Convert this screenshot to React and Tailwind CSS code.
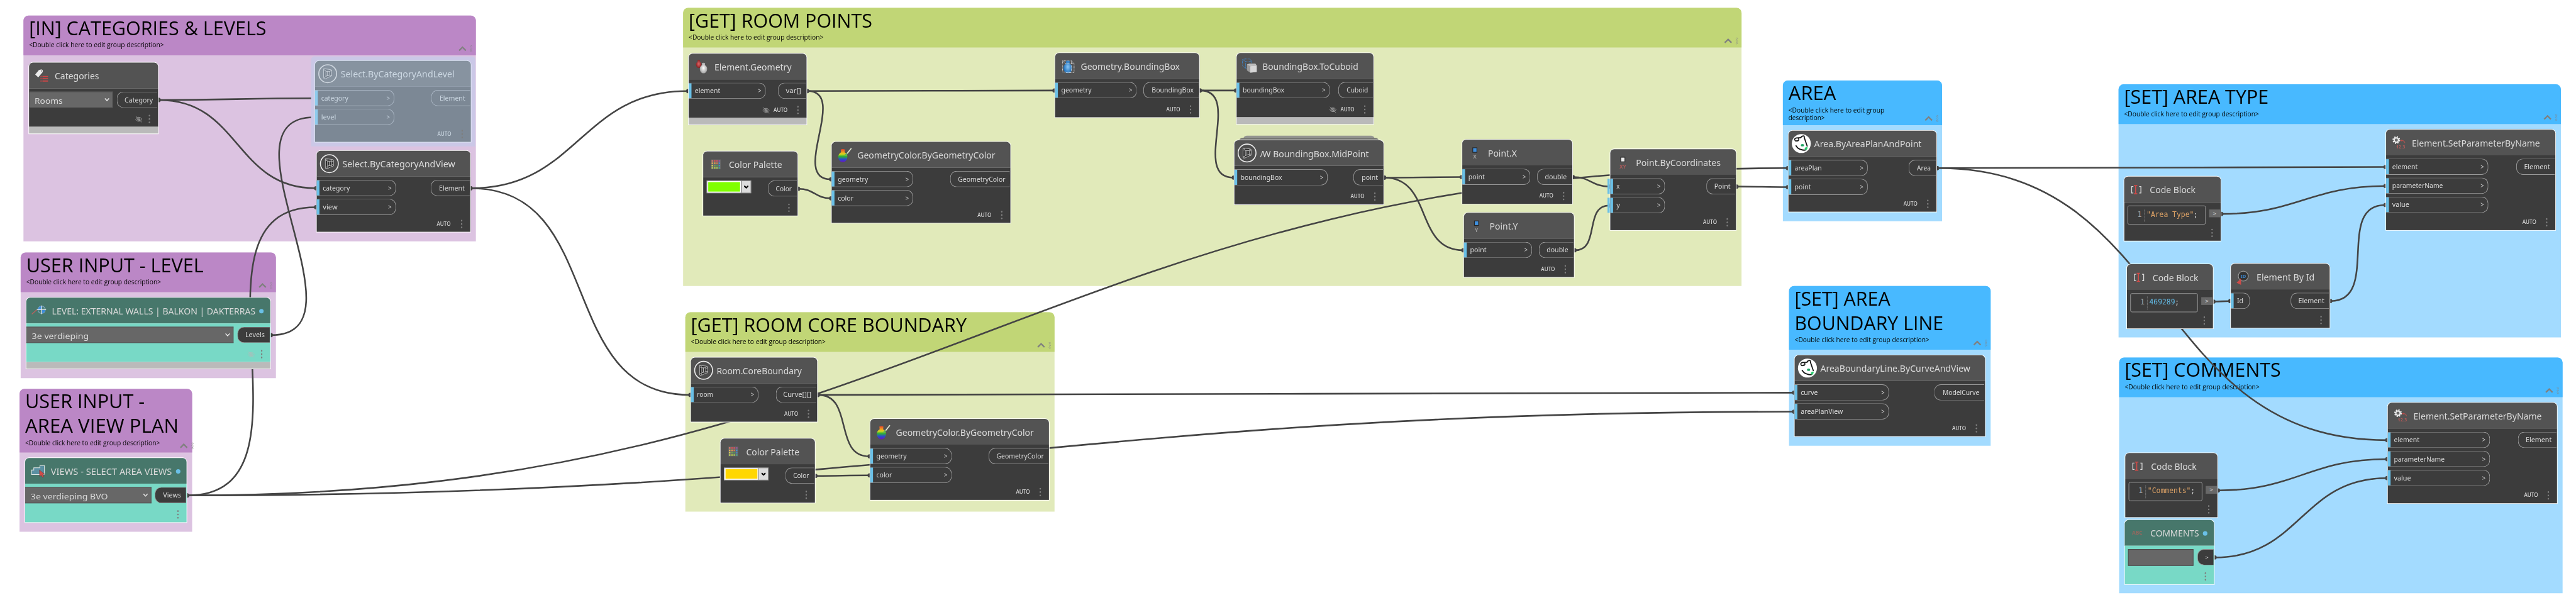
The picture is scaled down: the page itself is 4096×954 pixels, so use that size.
import { useLayoutEffect, useRef } from 'react';

const DESC = '<Double click here to edit group description>';

/* Text squeezed or stretched horizontally to a known width. */
function Fit({ w, className = '', children }) {
  const ref = useRef(null);
  useLayoutEffect(() => {
    const el = ref.current;
    if (el && w && el.offsetWidth) el.style.transform = `scaleX(${w / el.offsetWidth})`;
  }, [w]);
  return (
    <span className={`block shrink-0 whitespace-pre ${className}`} style={{ width: w }}>
      <span ref={ref} className="inline-block origin-left">{children}</span>
    </span>
  );
}

const GROUP = {
  purple: { head: 'bg-[#bb87c6]', body: 'bg-[#dcc3e1]' },
  green: { head: 'bg-[#c1d676]', body: 'bg-[#e1eaba]' },
  blue: { head: 'bg-[#48b9ff]', body: 'bg-[#a3dbff]' },
};

const groups = [
  { c: 'purple', x: 42, y: 28, r: 852, h: 71, b: 432, t: [['[IN] CATEGORIES & LEVELS', 425]] },
  { c: 'purple', x: 37, y: 452, r: 494, h: 71, b: 676.5, t: [['USER INPUT - LEVEL', 318]] },
  { c: 'purple', x: 35, y: 696, r: 344, h: 114, b: 952, t: [['USER INPUT -', 214], ['AREA VIEW PLAN', 275]] },
  { c: 'green', x: 1223, y: 14, r: 3118, h: 71, b: 512, t: [['[GET] ROOM POINTS', 329]] },
  { c: 'green', x: 1227, y: 559, r: 1888, h: 71, b: 916, t: [['[GET] ROOM CORE BOUNDARY', 494]] },
  { c: 'blue', x: 3192, y: 144, r: 3477, h: 80, b: 396, t: [['AREA', 85]], d: [['<Double click here to edit group', 172], ['description>', 65.5]] },
  { c: 'blue', x: 3203, y: 512, r: 3564, h: 114, b: 798, t: [['[SET] AREA', 171], ['BOUNDARY LINE', 266]] },
  { c: 'blue', x: 3793, y: 151, r: 4585, h: 71, b: 604, t: [['[SET] AREA TYPE', 259]] },
  { c: 'blue', x: 3794, y: 640, r: 4588, h: 71, b: 1062, t: [['[SET] COMMENTS', 279]] },
];

function Group({ g }) {
  const c = GROUP[g.c];
  return (
    <section
      className={`absolute flex flex-col rounded-t-[9px] ${c.body}`}
      style={{ left: g.x, top: g.y, width: g.r - g.x, height: g.b - g.y }}
    >
      <header className={`flex shrink-0 justify-between rounded-t-[9px] ${c.head}`} style={{ height: g.h }}>
        <div className="pl-[10px] font-['Open_Sans',sans-serif] text-black">
          <h2 className="text-[35px] leading-[44px]">
            {g.t.map(([s, w]) => <Fit key={s} w={w}>{s}</Fit>)}
          </h2>
          <div className="pt-[1.5px] text-[12px] leading-[14px]">
            {(g.d || [[DESC, 241]]).map(([s, w]) => <Fit key={s} w={w}>{s}</Fit>)}
          </div>
        </div>
        <svg className="mr-[5px] mb-[4px] shrink-0 self-end" width="28" height="16" viewBox="0 0 28 16">
          <path d="M3 11.5 L9 5.5 L15 11.5" fill="none" stroke="#808080" strokeWidth="2.6" />
          <g fill="none" stroke="#858585" strokeWidth="1" strokeDasharray="1.2 .8">
            <circle cx="24.5" cy="4" r="1.4" />
            <circle cx="24.5" cy="8.2" r="1.4" />
            <circle cx="24.5" cy="12.4" r="1.4" />
          </g>
        </svg>
      </header>
    </section>
  );
}

/* ---------- node icons, drawn on the 46x46 left part of a node header ---------- */

function Vase({ x, y, fill, s = 1 }) {
  return (
    <g transform={`translate(${x} ${y}) scale(${s})`}>
      <path d="M-3.6 -11 Q0 -12.6 3.6 -11 L3 -6.5 Q8 -3.5 8 1.5 Q8 7 3.5 10.5 Q0 12 -3.5 10.5 Q-8 7 -8 1.5 Q-8 -3.5 -3 -6.5 Z" fill={fill} />
    </g>
  );
}

function RoundBox() {
  return (
    <g>
      <circle cx="22.7" cy="23" r="16" fill="#4c4c4c" stroke="#ececec" strokeWidth="1.8" />
      <path d="M15.5 14 L27.5 15.5 Q30 16 30 18 V26.5 L19 31.8 Q15.5 33 15.5 30 Z" fill="#2d2d2d" stroke="#c4c4c4" strokeWidth="1" />
      <path d="M19.5 18.5 H26.5 V25.5 L19.5 27.5 Z M22.5 18.5 V26.5 M15.5 15 L19.5 18.5 M30 17 L26.5 18.5 M16 31 L19.5 27.5 M29.5 26.5 L26.5 25.5" fill="none" stroke="#c4c4c4" strokeWidth="1.1" />
      <g fill="#2d2d2d" stroke="#d0d0d0" strokeWidth=".9">
        <circle cx="17" cy="16" r="1.6" /><circle cx="28.3" cy="17.6" r="1.6" />
        <circle cx="17.4" cy="30.4" r="1.6" /><circle cx="28.4" cy="26.3" r="1.6" />
      </g>
    </g>
  );
}

function DogFace() {
  return (
    <g>
      <circle cx="23" cy="23" r="17" fill="#fff" />
      <path d="M15.5 17.5 Q13.5 20 11.5 17 Q10 14 14 13 L22 12.5 M17.5 13 Q20 16.5 16.5 18.5" fill="none" stroke="#151515" strokeWidth="1.8" strokeLinecap="round" />
      <path d="M22 12.5 Q24 9 28 9.5 L28.5 13 L33.5 27.5" fill="none" stroke="#151515" strokeWidth="2" strokeLinecap="round" strokeLinejoin="round" />
      <path d="M13.5 27 Q17 32.5 22 33.5 Q27 35.5 31 34.5" fill="none" stroke="#151515" strokeWidth="2" strokeLinecap="round" />
      <ellipse cx="25" cy="26" rx="3" ry="2.1" fill="#1fa363" />
      <path d="M29 31.5 Q32 28 34 29.5 Q34.5 33.5 31 35 Q28.5 34 29 31.5 Z" fill="#2dcc70" />
    </g>
  );
}

const PALETTE = [
  '#d9776b', '#e05050', '#d65063', '#98539e',
  '#e5ae5c', '#dfa050', '#d8774f', '#4b8fd0',
  '#d6cf58', '#6fa557', '#4c9c53', '#418ac9',
  '#b6cf5b', '#b8cc45', '#a2c653', '#4da58a',
];

function Icon({ kind, faded }) {
  return (
    <svg className={`shrink-0 ${faded ? 'opacity-70' : ''}`} width="46" height="46" viewBox="0 0 46 46">
      {kind === 'tag' && (
        <g>
          <path d="M17.5 13.5 L22 12 L24.5 13.5 L24.5 17 L16.5 26.5 L11 21.5 Z" fill="#ececec" />
          <circle cx="22" cy="15" r="1" fill="#535353" />
          <g fill="#d24545">
            <path d="M20.5 24 h2 v2 h-2z M24 24 h10 v2 h-10z M20.5 28 h2 v2 h-2z M24 28 h10 v2 h-10z M20.5 32 h2 v2 h-2z M24 32 h10 v2 h-10z" />
          </g>
        </g>
      )}
      {kind === 'round' && !faded && <RoundBox />}
      {kind === 'round' && faded && (
        <g fill="none" stroke="#eef4fb">
          <circle cx="22.7" cy="23" r="16" strokeWidth="1.8" />
          <path d="M15.5 14 L27.5 15.5 Q30 16 30 18 V26.5 L19 31.8 Q15.5 33 15.5 30 Z" fill="#6d7986" strokeWidth="1" />
          <path d="M19.5 18.5 H26.5 V25.5 L19.5 27.5 Z M22.5 18.5 V26.5 M15.5 15 L19.5 18.5 M30 17 L26.5 18.5 M16 31 L19.5 27.5 M29.5 26.5 L26.5 25.5" strokeWidth="1.1" />
        </g>
      )}
      {kind === 'dog' && <DogFace />}
      {kind === 'level' && (
        <g>
          <path d="M10 29.5 L19 21.5" stroke="#c0605f" strokeWidth="1.5" />
          <circle cx="27.5" cy="21.5" r="6.6" fill="#4d8078" stroke="#7ea6c4" strokeWidth="1.4" />
          <path d="M27.5 21.5 V15 A6.5 6.5 0 0 0 21 21.5 Z M27.5 21.5 V28 A6.5 6.5 0 0 0 34 21.5 Z" fill="#3f8fdd" />
          <path d="M27.5 14 V29.5 M19 21.5 H35.5" stroke="#f2f2f2" strokeWidth="1.3" />
        </g>
      )}
      {kind === 'views' && (
        <g>
          <path d="M11.5 29.5 V21.5 H15.5 V17.5 H26.5 V13.5 H34.5 V29.5 Z" fill="#5b90a2" stroke="#dfe7e6" strokeWidth="1.2" />
          <path d="M25.5 21.5 L35 29 L31.5 29.5 L33.5 33.5 L31 34.5 L29 31 L26 33 Z" fill="#d14b48" stroke="#5a3b3b" strokeWidth=".6" />
        </g>
      )}
      {kind === 'geometry' && (
        <g>
          <Vase x={18} y={18.5} fill="url(#vaseRed)" s={0.62} />
          <Vase x={26.5} y={26} fill="url(#vaseWhite)" s={0.82} />
        </g>
      )}
      {kind === 'palette' && (
        <g>
          <rect x="14" y="14.5" width="17.5" height="17.5" fill="#676767" />
          {PALETTE.map((c, i) => (
            <rect key={i} x={15 + (i % 4) * 4.2} y={15.7 + Math.floor(i / 4) * 4.2} width="2.7" height="2.7" fill={c} />
          ))}
        </g>
      )}
      {kind === 'rainbow' && (
        <g>
          <Vase x={20} y={25} fill="url(#vaseRainbow)" s={1.02} />
          <path d="M22.5 25.5 Q24 21 27 20 L28.5 21 Q27.5 24.5 22.5 25.5 Z" fill="#5fb35f" />
          <path d="M27 20.3 L34.5 10.8 L36 12 L28.6 21.2 Z" fill="#e2e8d5" />
        </g>
      )}
      {kind === 'bbox' && (
        <g>
          <Vase x={22.8} y={25} fill="url(#vaseBlue)" s={0.98} />
          <path d="M13.5 14 H29 V34 H13.5 Z M18.5 18.5 H34 V35 H18.5 M13.5 14 L18.5 18.5 M29 14 L34 18.5" fill="none" stroke="#e6e6e6" strokeWidth="1.1" strokeDasharray="1.3 1.2" />
        </g>
      )}
      {kind === 'cuboid' && (
        <g>
          <path d="M10.5 12 L14 10.5 H23 L27 14 V27.5 H16 L10.5 23 Z M10.5 12 L16 15 H27 M16 15 V27.5" fill="none" stroke="#3f86c9" strokeWidth="1.2" strokeDasharray="1.4 1.1" />
          <path d="M18.5 20.5 L23 19 H33.5 L36 22.5 V34 L24.5 35 L18.5 31 Z" fill="#9c9c9c" />
          <path d="M24.5 23.5 L36 22.5 V34 L24.5 35 Z" fill="#d6d6d6" />
          <path d="M18.5 20.5 L23 19 H33.5 L36 22.5 L24.5 23.5 Z" fill="#bdbdbd" />
        </g>
      )}
      {(kind === 'px' || kind === 'py' || kind === 'pxy') && (
        <g>
          <rect x="18.8" y="14.5" width="7.4" height="8.2" fill={kind === 'pxy' ? '#ececec' : '#3f8fdd'} stroke="#262626" strokeWidth="1.3" />
          <text x="22.5" y="34.3" textAnchor="middle" className="font-['Noto_Sans',sans-serif] text-[9.5px] font-bold" fill={kind === 'pxy' ? '#a55b5b' : '#9a9a9a'}>
            {kind === 'px' ? 'X' : kind === 'py' ? 'Y' : 'XY'}
          </text>
        </g>
      )}
      {kind === 'param' && (
        <g>
          <circle cx="18.3" cy="18.7" r="5.6" fill="none" stroke="#ececec" strokeWidth="2.6" strokeDasharray="2.2 2.2" />
          <circle cx="18.3" cy="18.7" r="3.9" fill="#6a6a6a" stroke="#ececec" strokeWidth="2.2" />
          <path d="M26.5 19.6 Q32.5 18.6 33.6 24" fill="none" stroke="#a85450" strokeWidth="1.4" />
          <path d="M25 19.6 L28.5 17.8 V21.4 Z" fill="#c04a47" />
          <text x="26" y="33.8" textAnchor="middle" className="font-['Noto_Sans',sans-serif] text-[8.2px] font-bold" fill="#b05a58">12.3</text>
        </g>
      )}
      {kind === 'code' && (
        <g fill="none">
          <path d="M16.5 18 H13.5 V29.5 H16.5 M27 18 H30 V29.5 H27" stroke="#dedede" strokeWidth="1.4" />
          <path d="M17.5 16.3 H23.5 M17.5 30.9 H23.5 M20.5 16 V31" stroke="#cf4a47" strokeWidth="1.9" />
        </g>
      )}
      {kind === 'id' && (
        <g>
          <circle cx="22.3" cy="22.3" r="9" fill="#333" stroke="#9a9a9a" strokeWidth="1.4" />
          <text x="22.3" y="25.4" textAnchor="middle" className="font-['Noto_Sans',sans-serif] text-[8.6px] font-bold" fill="#3c82c4">ID</text>
          <path d="M10.3 34 L18.3 26.5 V38 Z" fill="#cf4c49" />
        </g>
      )}
      {kind === 'abc' && (
        <text x="22.5" y="26.4" textAnchor="middle" className="font-['Noto_Sans',sans-serif] text-[9.4px] font-bold" fill="#96685f">ABC</text>
      )}
    </svg>
  );
}

/* ---------- nodes ---------- */

const THEME = {
  dark: { head: 'bg-[#535353]', body: 'bg-[#3c3c3c]', text: 'text-[#dadada]', out: 'border-[#9b9b9b] bg-[#3c3c3c]', port: 'border-[#9b9b9b]', bar: 'bg-[#6ac0e7]', edge: 'bg-white' },
  teal: { head: 'bg-[#47776b]', body: 'bg-[#78d9c6]', text: 'text-[#dadada]', out: 'border-[#9b9b9b] bg-[#3c3c3c]', port: 'border-[#9b9b9b]', bar: 'bg-[#6ac0e7]', edge: 'bg-white' },
  frozen: { head: 'bg-[#8793a0]', body: 'bg-[#7c8895]', text: 'text-[#cbd7e2]', out: 'border-[#aab6c4]', port: 'border-[#aab6c4]', bar: 'bg-[#8ecbec]', edge: 'bg-[#dfe8f5]' },
};

const nodes = {
  cat: { x: 52, y: 112, r: 283, icon: 'tag', t: 'Categories', w: 79.5, h: 69, eye: 1, gray: 1, drop: ['Rooms', 50.5, 149.5], out: ['Category', 50.5, 208.7] },
  lvl: { x: 564, y: 109, r: 842.5, theme: 'frozen', icon: 'round', t: 'Select.ByCategoryAndLevel', w: 204, h: 99, auto: 1, inW: 141.5, ins: [['category', 49], ['level', 26.5]], out: ['Element', 45.5, 772] },
  view: { x: 567, y: 270, r: 841.5, icon: 'round', t: 'Select.ByCategoryAndView', w: 201.5, h: 99, auto: 1, inW: 141.5, ins: [['category', 49], ['view', 26.5]], out: ['Element', 45.5, 771] },
  inLevel: { x: 47, y: 533, r: 484, theme: 'teal', icon: 'level', t: 'LEVEL: EXTERNAL WALLS | BALKON | DAKTERRAS', w: 364, dot: 1, h: 69, eye: 1, gray: 1, drop: ['3e verdieping', 102, 371], out: ['Levels', 34.7, 424.5] },
  inView: { x: 45, y: 820, r: 334, theme: 'teal', icon: 'views', t: 'VIEWS - SELECT AREA VIEWS', w: 216.5, dot: 1, h: 69, drop: ['3e verdieping BVO', 138, 226], out: ['Views', 32.5, 277] },
  eg: { x: 1233, y: 96, r: 1444, icon: 'geometry', t: 'Element.Geometry', w: 138, h: 69, auto: 1, eye: 1, gray: 1, inW: 137.5, ins: [['element', 46]], out: ['var[]', 27, 1393] },
  pal: { x: 1259, y: 271, r: 1428, icon: 'palette', t: 'Color Palette', w: 95.5, h: 69, swatch: 'bg-[#80ff00]', out: ['Color', 28.6, 1375] },
  gc: { x: 1489, y: 254, r: 1809, icon: 'rainbow', t: 'GeometryColor.ByGeometryColor', w: 246.5, h: 99, auto: 1, inW: 145.5, ins: [['geometry', 54], ['color', 28]], out: ['GeometryColor', 84.5, 1701] },
  bb: { x: 1889, y: 95, r: 2147, icon: 'bbox', t: 'Geometry.BoundingBox', w: 177, h: 69, auto: 1, inW: 145.5, ins: [['geometry', 54]], out: ['BoundingBox', 75, 2047] },
  cub: { x: 2214, y: 95, r: 2459, icon: 'cuboid', t: 'BoundingBox.ToCuboid', w: 172, h: 69, auto: 1, eye: 1, gray: 1, inW: 166.5, ins: [['boundingBox', 74.5]], out: ['Cuboid', 38.3, 2396] },
  mid: { x: 2210, y: 251, r: 2477, icon: 'round', pre: '/', t: 'W BoundingBox.MidPoint', w: 194.5, h: 69, auto: 1, stack: 1, inW: 166.5, ins: [['boundingBox', 74.5]], out: ['point', 29, 2423] },
  px: { x: 2618, y: 250, r: 2815, icon: 'px', t: 'Point.X', w: 52, h: 69, auto: 1, inW: 121.5, ins: [['point', 29]], out: ['double', 38.7, 2752] },
  py: { x: 2621, y: 381, r: 2818, icon: 'py', t: 'Point.Y', w: 51, h: 69, auto: 1, inW: 121.5, ins: [['point', 29]], out: ['double', 38.7, 2755] },
  xy: { x: 2883, y: 267, r: 3108, icon: 'pxy', t: 'Point.ByCoordinates', w: 151.5, h: 99, auto: 1, inW: 97.5, outerBars: 1, ins: [['x', 6], ['y', 6]], out: ['Point', 29, 3054.5] },
  core: { x: 1237, y: 640, r: 1463, icon: 'round', t: 'Room.CoreBoundary', w: 152, h: 69, auto: 1, inW: 121, ins: [['room', 28.6]], out: ['Curve[][]', 51, 1388.5] },
  pal2: { x: 1290, y: 785, r: 1459, icon: 'palette', t: 'Color Palette', w: 95.5, h: 69, swatch: 'bg-[#ffd700]', out: ['Color', 28.6, 1406] },
  gc2: { x: 1558, y: 750, r: 1878, icon: 'rainbow', t: 'GeometryColor.ByGeometryColor', w: 246.5, h: 99, auto: 1, inW: 145.5, ins: [['geometry', 54], ['color', 28]], out: ['GeometryColor', 84.5, 1770] },
  area: { x: 3202, y: 234, r: 3467, icon: 'dog', t: 'Area.ByAreaPlanAndPoint', w: 192.7, h: 99, auto: 1, inW: 142, ins: [['areaPlan', 49], ['point', 29]], out: ['Area', 25.3, 3417] },
  line: { x: 3213, y: 636, r: 3554, icon: 'dog', t: 'AreaBoundaryLine.ByCurveAndView', w: 268.5, h: 99, auto: 1, inW: 168.5, ins: [['curve', 30.7], ['areaPlanView', 76]], out: ['ModelCurve', 66, 3463] },
  sp: { x: 4272, y: 232, r: 4575, icon: 'param', t: 'Element.SetParameterByName', w: 230, h: 134, auto: 1, inW: 182.5, ins: [['element', 46], ['parameterName', 91], ['value', 30.5]], out: ['Element', 46, 4505.3] },
  cb1: { x: 3803, y: 316, r: 3976, icon: 'code', t: 'Code Block', w: 81.5, h: 69, code: ['"Area Type"', 139.5, 'text-[#dda266]'] },
  cb2: { x: 3808, y: 473, r: 3962, icon: 'code', t: 'Code Block', w: 81.5, h: 69, code: ['469289', 120.5, 'text-[#63bbe6]'] },
  eid: { x: 3994, y: 472, r: 4171, icon: 'id', t: 'Element By Id', w: 104, h: 69, inW: 33.5, short: 1, ins: [['Id', 11.5]], out: ['Element', 46, 4101] },
  sp2: { x: 4275, y: 721, r: 4578, icon: 'param', t: 'Element.SetParameterByName', w: 230, h: 134, auto: 1, inW: 182.5, ins: [['element', 46], ['parameterName', 91], ['value', 30.5]], out: ['Element', 46, 4508.3] },
  cb3: { x: 3805, y: 811, r: 3970, icon: 'code', t: 'Code Block', w: 81.5, h: 69, code: ['"Comments"', 131.5, 'text-[#dda266]'] },
  com: { x: 3804, y: 931, r: 3964, theme: 'teal', icon: 'abc', t: 'COMMENTS', w: 87, dot: 1, h: 69, box: 1, out: ['>', 6, 3934] },
};

function Eye() {
  return (
    <svg className="shrink-0" width="13" height="13" viewBox="0 0 13 13" fill="none" stroke="#b8b8b8" strokeWidth=".8">
      <path d="M.6 6.5 Q3.4 2.8 6.5 2.8 Q9.6 2.8 12.4 6.5 Q9.6 10.2 6.5 10.2 Q3.4 10.2 .6 6.5 Z" />
      <circle cx="6.5" cy="6.5" r="2.4" />
      <circle cx="6.5" cy="6.5" r=".8" />
      <path d="M1.2 1.2 L11.8 12" />
    </svg>
  );
}

function Left({ n, th }) {
  if (n.ins) {
    return (
      <div className="flex flex-col gap-[5px]">
        {n.ins.map(([s, w]) => (
          <div key={s} className="relative flex h-[29px]" style={{ width: n.inW }}>
            {n.outerBars && <i className="absolute top-[1px] -left-[5px] h-[27px] w-[4px] bg-[#6ac0e7]" />}
            <i className={`my-[1px] w-[5px] shrink-0 ${th.bar}`} />
            <div className={`absolute inset-0 flex items-center justify-between rounded-r-[12px] border border-l-0 pr-[7px] pl-[11px] ${th.port}`}>
              <Fit w={w}>{s}</Fit>
              {!n.short && <Fit w={6}>{'>'}</Fit>}
            </div>
          </div>
        ))}
      </div>
    );
  }
  if (n.drop) {
    return (
      <div className="flex h-[29px] items-center justify-between border border-l-0 border-[#505050] bg-[#676767] pr-[5px] pl-[10px] text-[15px]" style={{ width: n.drop[2] }}>
        <Fit w={n.drop[1]} className="pt-[2px]">{n.drop[0]}</Fit>
        <svg width="9" height="7" viewBox="0 0 9 7"><path d="M.8 1.2 L4.5 5.2 L8.2 1.2" fill="none" stroke="#f2f2f2" strokeWidth="1.5" /></svg>
      </div>
    );
  }
  if (n.swatch) {
    return (
      <div className="ml-[6px] flex h-[23px] w-[80px] border border-[#a5a5a5]">
        <div className="flex w-[61px] bg-white p-[2px]"><div className={`flex-1 ${n.swatch}`} /></div>
        <div className="flex flex-1 items-center justify-center border-l border-[#707070] bg-[#dcdcdc]">
          <svg width="8" height="6" viewBox="0 0 8 6"><path d="M0 .5 H2 L4 2.6 L6 .5 H8 V2 L4 5.8 L0 2 Z" fill="#000" /></svg>
        </div>
      </div>
    );
  }
  if (n.code) {
    return (
      <div className="ml-[6px] flex h-[34px] rounded-[3px] border border-[#a0a0a0] font-['DejaVu_Sans_Mono',monospace] text-[13px] leading-[29px]" style={{ width: n.code[1] }}>
        <span className="w-[28.5px] pr-[4px] text-right text-[#a8a8a8]">1</span>
        <span className="mt-[5px] h-[23px] w-0 border-l border-dotted border-[#999]" />
        <span className="flex pl-[3px]">
          <Fit w={n.code[0].length * 7.7} className={n.code[2]}>{n.code[0]}</Fit>
          <Fit w={7.7}>;</Fit>
        </span>
      </div>
    );
  }
  return <div className="ml-[6px] h-[30px] w-[117px] border border-[#484848] bg-[#676767]" />;
}

function Node({ n }) {
  const th = THEME[n.theme || 'dark'];
  return (
    <>
      {n.theme === 'frozen' && (
        <div className="absolute rounded-t-[6px] bg-[#cbc8e7]" style={{ left: n.x - 7, top: n.y - 8, width: n.r - n.x + 15, height: 161 }} />
      )}
      {n.stack && (
        <>
          <div className="absolute h-[20px] rounded-t-[6px] bg-[#949591]" style={{ left: n.x + 16, top: n.y - 8, width: n.r - n.x - 32 }} />
          <div className="absolute h-[20px] rounded-t-[6px] bg-[#72736f]" style={{ left: n.x + 8, top: n.y - 4, width: n.r - n.x - 16 }} />
        </>
      )}
      <article
        className={`absolute flex flex-col rounded-t-[8px] p-[1px] font-['Noto_Sans',sans-serif] text-[12.3px] leading-[16px] ${th.edge} ${th.text}`}
        style={{ left: n.x - 1, top: n.y - 1, width: n.r - n.x + 2 }}
      >
        <header className={`flex h-[46px] shrink-0 items-center rounded-t-[7px] ${th.head}`}>
          <Icon kind={n.icon} faded={n.theme === 'frozen'} />
          <Fit w={n.w} className="pt-[2px] text-[16px] leading-[22px]">
            {n.pre && <span className="tracking-[-1.5px]">{n.pre}</span>}
            {n.t}
          </Fit>
          {n.dot && <i className="mt-[2px] ml-[7px] h-[8px] w-[8px] rounded-full bg-[#6ac0e7]" />}
        </header>
        <div className={`flex shrink-0 flex-col justify-between pt-[6px] ${th.body}`} style={{ height: n.h }}>
          <div className="flex h-0 items-start justify-between">
            <Left n={n} th={th} />
            {n.out && (
              <div className={`mr-[1px] flex h-[29px] items-center justify-end rounded-l-[12px] border border-r-0 pr-[9px] ${th.out}`} style={{ width: n.r - n.out[2] - 1 }}>
                <Fit w={n.out[1]} className={n.out[0] === '>' ? 'text-[9px]' : ''}>{n.out[0]}</Fit>
              </div>
            )}
            {n.code && (
              <div className="mt-[7px] mr-[1px] flex h-[14px] w-[20px] items-center justify-center bg-[#686868] text-[11px]">{'>'}</div>
            )}
          </div>
          <footer className="flex h-[28px] items-center justify-end pr-[14px]">
            {n.eye && <Eye />}
            {n.auto && <Fit w={25.3} className="ml-[7px] text-[9.8px] font-medium">AUTO</Fit>}
            <svg className={n.auto ? 'ml-[17px]' : 'ml-[11px]'} width="3" height="16" viewBox="0 0 3 16" fill="#7e7e7e">
              <circle cx="1.5" cy="2" r="1.5" /><circle cx="1.5" cy="8" r="1.5" /><circle cx="1.5" cy="14" r="1.5" />
            </svg>
          </footer>
        </div>
        {n.gray && <div className="h-[12px] bg-[#bababa]" />}
      </article>
    </>
  );
}

/* ---------- wires: [from node, to node, input index] ---------- */

const wires = [
  ['cat', 'lvl', 0], ['cat', 'view', 0], ['inLevel', 'lvl', 1], ['inView', 'view', 1],
  ['inView', 'area', 0], ['inView', 'line', 1], ['view', 'eg', 0], ['view', 'core', 0],
  ['eg', 'bb', 0], ['eg', 'gc', 0], ['pal', 'gc', 1], ['bb', 'cub', 0], ['bb', 'mid', 0],
  ['mid', 'px', 0], ['mid', 'py', 0], ['px', 'xy', 0], ['py', 'xy', 1], ['xy', 'area', 1],
  ['area', 'sp', 0], ['area', 'sp2', 0], ['core', 'gc2', 0], ['core', 'line', 0], ['pal2', 'gc2', 1],
  ['cb1', 'sp', 1], ['cb2', 'eid', 0], ['eid', 'sp', 2], ['cb3', 'sp2', 1], ['com', 'sp2', 2],
];

function Wire({ from, to, i }) {
  const a = nodes[from];
  const b = nodes[to];
  const x0 = a.r + 2, y0 = a.y + 67, x1 = b.x - 2, y1 = b.y + 67 + 34 * i;
  const o = 0.45 * Math.hypot(x1 - x0, y1 - y0);
  return (
    <g>
      <path d={`M${x0} ${y0} C${x0 + o} ${y0} ${x1 - o} ${y1} ${x1} ${y1}`} fill="none" stroke="#444" strokeWidth="2.9" />
      <circle cx={a.r + 1} cy={y0} r="3.8" fill="#444" />
      <circle cx={b.x - 1} cy={y1} r="3.8" fill="#444" />
    </g>
  );
}

export default function App() {
  return (
    <main className="h-[954px] w-[4096px] overflow-hidden bg-white">
      <div className="relative h-[1074px] w-[4612px] origin-top-left scale-[0.88812]">
        {groups.map((g, i) => <Group key={i} g={g} />)}
        <svg className="absolute inset-0" width="4612" height="1074" viewBox="0 0 4612 1074">
          <defs>
            <radialGradient id="vaseRed"><stop offset="0" stopColor="#e06a6a" /><stop offset="1" stopColor="#8c1f22" /></radialGradient>
            <radialGradient id="vaseWhite"><stop offset="0" stopColor="#fff" /><stop offset="1" stopColor="#a5a5a5" /></radialGradient>
            <radialGradient id="vaseBlue"><stop offset="0" stopColor="#8cc8f5" /><stop offset="1" stopColor="#1b6cb8" /></radialGradient>
            <linearGradient id="vaseRainbow" x1="0" y1="0" x2="0" y2="1">
              <stop offset="0" stopColor="#e8452c" /><stop offset=".22" stopColor="#ef9a1f" /><stop offset=".38" stopColor="#d8d820" />
              <stop offset=".55" stopColor="#2fb52f" /><stop offset=".78" stopColor="#2a49cf" /><stop offset="1" stopColor="#6a16b8" />
            </linearGradient>
          </defs>
          {wires.map(([f, t, i]) => <Wire key={f + t + i} from={f} to={t} i={i} />)}
        </svg>
        {Object.entries(nodes).map(([k, n]) => <Node key={k} n={n} />)}
      </div>
    </main>
  );
}
